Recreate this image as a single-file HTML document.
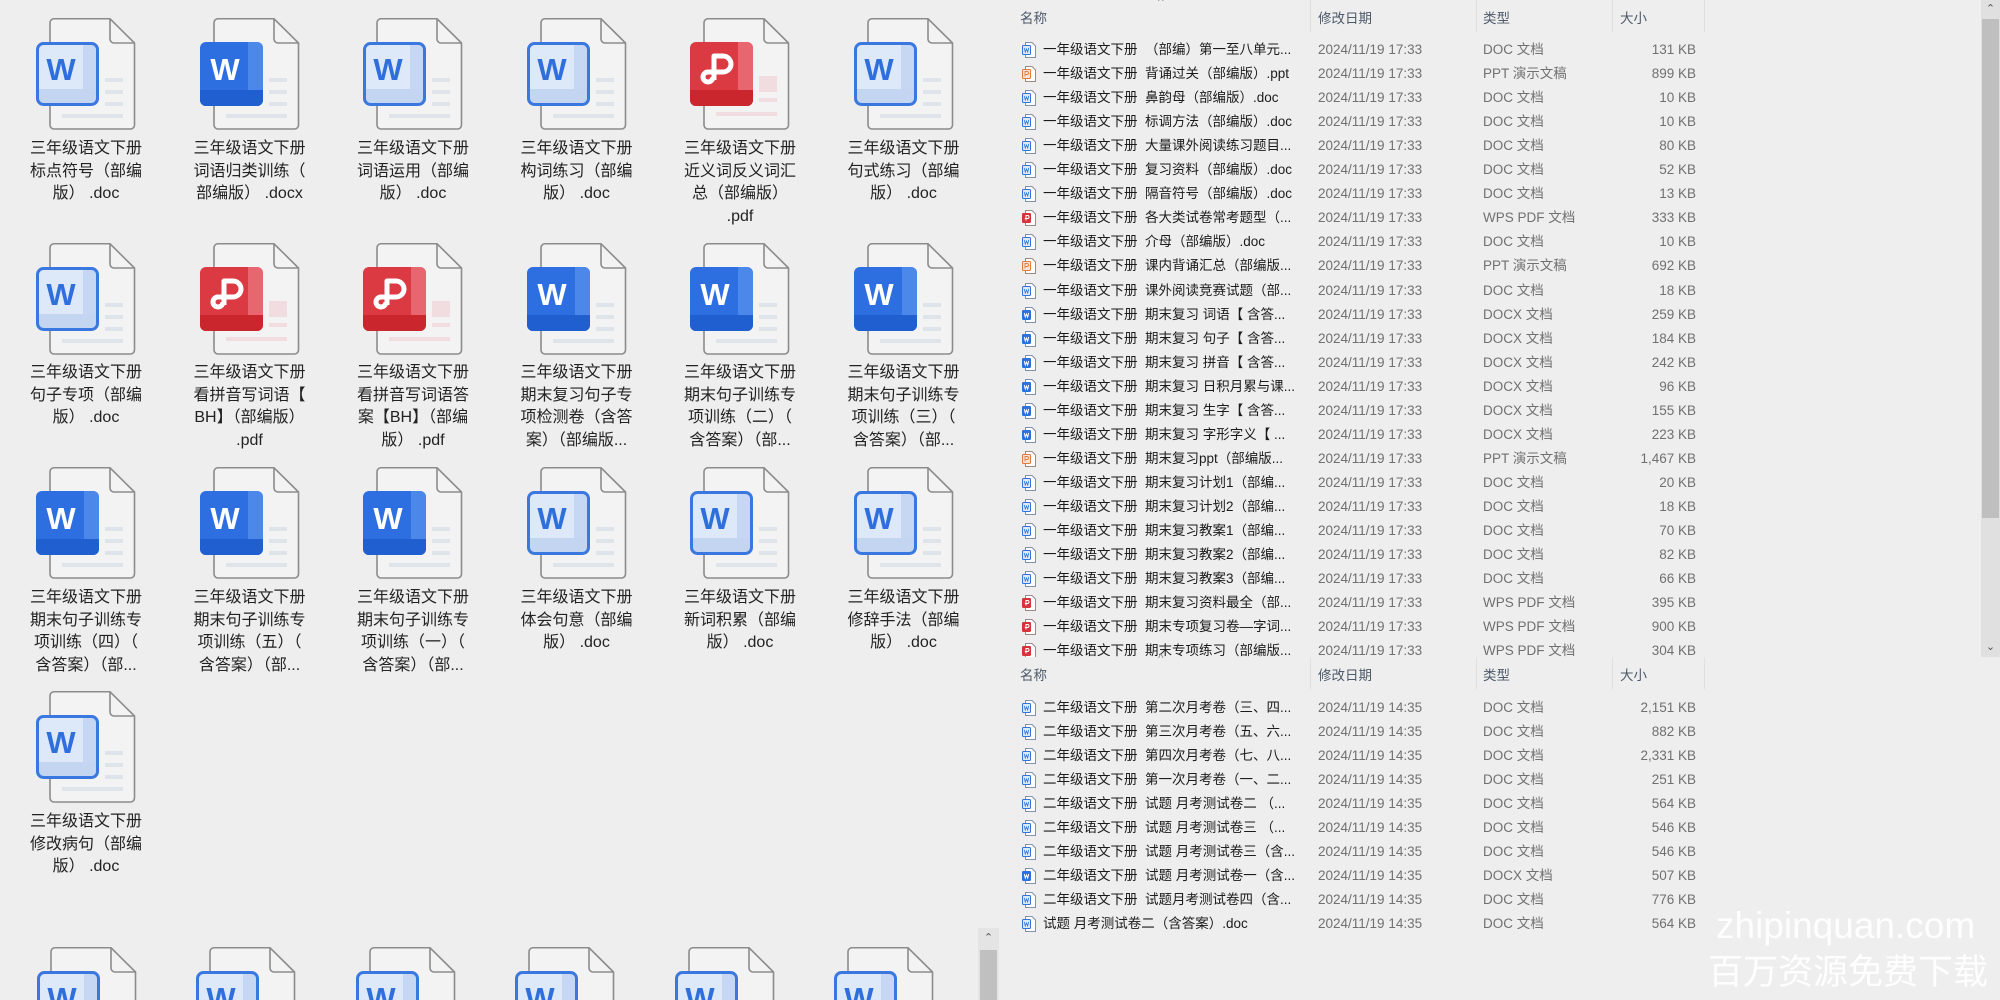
<!DOCTYPE html>
<html><head><meta charset="utf-8">
<style>
html,body{margin:0;padding:0;overflow:hidden;width:2000px;height:1000px;}
body{background:#eeeeee;font-family:"Liberation Sans","Noto Sans CJK SC",sans-serif;}
#w{position:relative;width:2000px;height:1000px;overflow:hidden;background:#eeeeee;}
.ic{position:absolute;width:100px;height:112px;}
.ic2{position:absolute;width:100px;height:53px;top:947px;}
.lb{position:absolute;width:140px;text-align:center;font-size:16px;line-height:22.5px;color:#222;}
.r{position:absolute;left:0;width:1980px;height:20px;font-size:13.5px;line-height:20px;white-space:nowrap;}
.r svg{position:absolute;left:1020px;top:2px;width:18px;height:16px;}
.r .n{position:absolute;left:1043px;color:#1b1b1b;width:265px;overflow:hidden;}
.r .d{position:absolute;left:1318px;color:#707070;font-size:13.5px;}
.r .t{position:absolute;left:1483px;color:#707070;}
.r .s{position:absolute;left:1600px;width:96px;text-align:right;color:#707070;}
.h{position:absolute;left:1000px;width:980px;height:32px;font-size:13.5px;color:#4d5a6a;}
.h span{position:absolute;top:7px;}
.h i{position:absolute;top:0;width:1px;height:32px;background:#e0e0e0;}
.h b{position:absolute;top:-6px;left:158px;font-weight:normal;color:#888;font-size:12px;}
</style></head><body><div id="w">
<svg width="0" height="0" style="position:absolute">
<defs>
<g id="doc">
<path d="M18,0.75 H74 L98.5,25 V107 a4,4 0 0 1 -4,4 H18 a4,4 0 0 1 -4,-4 V4.75 a4,4 0 0 1 4,-4 Z" fill="#f3f3f3" stroke="#8c8c8c" stroke-width="1.6"/>
<path d="M74,0.75 V21 a4,4 0 0 0 4,4 H98.5" fill="none" stroke="#8c8c8c" stroke-width="1.6"/>
</g>
<symbol id="bw" viewBox="0 0 100 112">
<use href="#doc"/>
<rect x="69" y="60" width="18" height="4" fill="#dfe3ea"/><rect x="69" y="72" width="18" height="4" fill="#dfe3ea"/><rect x="69" y="84" width="18" height="4" fill="#dfe3ea"/><rect x="26" y="96" width="61" height="4" fill="#dfe3ea"/>
<rect x="1.5" y="25.5" width="60" height="61" rx="6" fill="#dde8f8"/>
<rect x="47" y="27" width="13" height="58" fill="#c6d7f3"/>
<rect x="3" y="71" width="57" height="14" fill="#c4d5f2"/>
<rect x="1.5" y="25.5" width="60" height="61" rx="6" fill="none" stroke="#3a78e0" stroke-width="3"/>
<text x="25" y="62" font-family="Liberation Sans,sans-serif" font-weight="bold" font-size="31" fill="#2f6fdc" text-anchor="middle">W</text>
</symbol>
<symbol id="bs" viewBox="0 0 100 112">
<use href="#doc"/>
<rect x="69" y="60" width="18" height="4" fill="#dfe3ea"/><rect x="69" y="72" width="18" height="4" fill="#dfe3ea"/><rect x="69" y="84" width="18" height="4" fill="#dfe3ea"/><rect x="26" y="96" width="61" height="4" fill="#dfe3ea"/>
<rect x="0" y="24" width="63" height="64" rx="6" fill="#2d6fe0"/>
<path d="M48,24 H57 a6,6 0 0 1 6,6 V82 a6,6 0 0 1 -6,6 H48 Z" fill="#4c87ea"/>
<path d="M0,72 H63 V82 a6,6 0 0 1 -6,6 H6 a6,6 0 0 1 -6,-6 Z" fill="#1f5fd0"/>
<text x="25" y="62" font-family="Liberation Sans,sans-serif" font-weight="bold" font-size="31" fill="#ffffff" text-anchor="middle">W</text>
</symbol>
<symbol id="bp" viewBox="0 0 100 112">
<use href="#doc"/>
<rect x="69" y="58" width="18" height="16" fill="#f1dde0"/><rect x="69" y="80" width="18" height="4" fill="#f1dde0"/><rect x="26" y="94" width="61" height="4" fill="#f1dde0"/>
<rect x="0" y="24" width="63" height="64" rx="6" fill="#dc3a42"/>
<path d="M48,24 H57 a6,6 0 0 1 6,6 V82 a6,6 0 0 1 -6,6 H48 Z" fill="#e86670"/>
<path d="M0,72 H63 V82 a6,6 0 0 1 -6,6 H6 a6,6 0 0 1 -6,-6 Z" fill="#c9262e"/>
<path d="M24,62 V38 H33 a8,8 0 0 1 0,16 H18 a5,5 0 1 0 5,5" fill="none" stroke="#fff" stroke-width="5" stroke-linejoin="round"/>
</symbol>
<symbol id="sd" viewBox="0 0 18 16">
<path d="M5.5,0.5 H12 L15.5,4 V15.5 H5.5 Z" fill="#fff" stroke="#8290aa"/>
<rect x="2.5" y="3.5" width="8" height="9" rx="1" fill="#dde8fa" stroke="#3372dc"/>
<path d="M4.3,6 L5.3,10 L6.5,7 L7.7,10 L8.7,6" fill="none" stroke="#3372dc" stroke-width="0.8"/>
</symbol>
<symbol id="sx" viewBox="0 0 18 16">
<path d="M5.5,0.5 H12 L15.5,4 V15.5 H5.5 Z" fill="#fff" stroke="#8290aa"/>
<rect x="2" y="3" width="9" height="10" rx="1.2" fill="#2d6fe0"/>
<path d="M4.3,6 L5.3,10 L6.5,7 L7.7,10 L8.7,6" fill="none" stroke="#fff" stroke-width="1"/>
</symbol>
<symbol id="sp" viewBox="0 0 18 16">
<path d="M5.5,0.5 H12 L15.5,4 V15.5 H5.5 Z" fill="#fff" stroke="#9a8a80"/>
<rect x="2.5" y="3.5" width="8" height="9" rx="1" fill="#fbe3d6" stroke="#e07a3c"/>
<path d="M5,10.5 V5.5 H7 a1.5,1.5 0 0 1 0,3 H5" fill="none" stroke="#e07a3c" stroke-width="0.9"/>
</symbol>
<symbol id="sf" viewBox="0 0 18 16">
<path d="M5.5,0.5 H12 L15.5,4 V15.5 H5.5 Z" fill="#fff" stroke="#9a8a8a"/>
<rect x="2" y="3" width="9" height="10" rx="1.2" fill="#d8323a"/>
<path d="M6,10.5 V5.5 H7.5 a1.5,1.5 0 0 1 0,3 H4.8" fill="none" stroke="#fff" stroke-width="1"/>
</symbol>
</defs></svg>

<svg class="ic" style="left:36px;top:18px"><use href="#bw"/></svg>
<svg class="ic" style="left:199.5px;top:18px"><use href="#bs"/></svg>
<svg class="ic" style="left:363px;top:18px"><use href="#bw"/></svg>
<svg class="ic" style="left:526.5px;top:18px"><use href="#bw"/></svg>
<svg class="ic" style="left:690px;top:18px"><use href="#bp"/></svg>
<svg class="ic" style="left:853.5px;top:18px"><use href="#bw"/></svg>
<div class="lb" style="left:16px;top:138px">三年级语文下册<br>标点符号（部编<br>版） .doc</div>
<div class="lb" style="left:179.5px;top:138px">三年级语文下册<br>词语归类训练（<br>部编版） .docx</div>
<div class="lb" style="left:343px;top:138px">三年级语文下册<br>词语运用（部编<br>版） .doc</div>
<div class="lb" style="left:506.5px;top:138px">三年级语文下册<br>构词练习（部编<br>版） .doc</div>
<div class="lb" style="left:670px;top:138px">三年级语文下册<br>近义词反义词汇<br>总（部编版）<br>.pdf</div>
<div class="lb" style="left:833.5px;top:138px">三年级语文下册<br>句式练习（部编<br>版） .doc</div>

<svg class="ic" style="left:36px;top:243px"><use href="#bw"/></svg>
<svg class="ic" style="left:199.5px;top:243px"><use href="#bp"/></svg>
<svg class="ic" style="left:363px;top:243px"><use href="#bp"/></svg>
<svg class="ic" style="left:526.5px;top:243px"><use href="#bs"/></svg>
<svg class="ic" style="left:690px;top:243px"><use href="#bs"/></svg>
<svg class="ic" style="left:853.5px;top:243px"><use href="#bs"/></svg>
<div class="lb" style="left:16px;top:362px">三年级语文下册<br>句子专项（部编<br>版） .doc</div>
<div class="lb" style="left:179.5px;top:362px">三年级语文下册<br>看拼音写词语【<br>BH】（部编版）<br>.pdf</div>
<div class="lb" style="left:343px;top:362px">三年级语文下册<br>看拼音写词语答<br>案【BH】（部编<br>版） .pdf</div>
<div class="lb" style="left:506.5px;top:362px">三年级语文下册<br>期末复习句子专<br>项检测卷（含答<br>案）（部编版...</div>
<div class="lb" style="left:670px;top:362px">三年级语文下册<br>期末句子训练专<br>项训练（二）（<br>含答案）（部...</div>
<div class="lb" style="left:833.5px;top:362px">三年级语文下册<br>期末句子训练专<br>项训练（三）（<br>含答案）（部...</div>

<svg class="ic" style="left:36px;top:467px"><use href="#bs"/></svg>
<svg class="ic" style="left:199.5px;top:467px"><use href="#bs"/></svg>
<svg class="ic" style="left:363px;top:467px"><use href="#bs"/></svg>
<svg class="ic" style="left:526.5px;top:467px"><use href="#bw"/></svg>
<svg class="ic" style="left:690px;top:467px"><use href="#bw"/></svg>
<svg class="ic" style="left:853.5px;top:467px"><use href="#bw"/></svg>
<div class="lb" style="left:16px;top:587px">三年级语文下册<br>期末句子训练专<br>项训练（四）（<br>含答案）（部...</div>
<div class="lb" style="left:179.5px;top:587px">三年级语文下册<br>期末句子训练专<br>项训练（五）（<br>含答案）（部...</div>
<div class="lb" style="left:343px;top:587px">三年级语文下册<br>期末句子训练专<br>项训练（一）（<br>含答案）（部...</div>
<div class="lb" style="left:506.5px;top:587px">三年级语文下册<br>体会句意（部编<br>版） .doc</div>
<div class="lb" style="left:670px;top:587px">三年级语文下册<br>新词积累（部编<br>版） .doc</div>
<div class="lb" style="left:833.5px;top:587px">三年级语文下册<br>修辞手法（部编<br>版） .doc</div>

<svg class="ic" style="left:36px;top:691px"><use href="#bw"/></svg>
<div class="lb" style="left:16px;top:811px">三年级语文下册<br>修改病句（部编<br>版） .doc</div>

<svg class="ic2" style="left:37px" viewBox="0 0 100 53"><use href="#bw" width="100" height="112"/></svg>
<svg class="ic2" style="left:196px" viewBox="0 0 100 53"><use href="#bw" width="100" height="112"/></svg>
<svg class="ic2" style="left:356px" viewBox="0 0 100 53"><use href="#bw" width="100" height="112"/></svg>
<svg class="ic2" style="left:515px" viewBox="0 0 100 53"><use href="#bw" width="100" height="112"/></svg>
<svg class="ic2" style="left:675px" viewBox="0 0 100 53"><use href="#bw" width="100" height="112"/></svg>
<svg class="ic2" style="left:834px" viewBox="0 0 100 53"><use href="#bw" width="100" height="112"/></svg>

<div style="position:absolute;left:978px;top:928px;width:21px;height:72px;background:#e4e4e4"></div>
<div style="position:absolute;left:978px;top:928px;width:21px;height:20px;text-align:center;font-size:11px;line-height:20px;color:#555">&#8963;</div>
<div style="position:absolute;left:980px;top:950px;width:17px;height:50px;background:#c0c0c0"></div>

<div class="h" style="top:0"><span style="left:20px">名称</span><b>^</b><i style="left:310px"></i><span style="left:318px">修改日期</span><i style="left:476px"></i><span style="left:483px">类型</span><i style="left:612px"></i><span style="left:620px">大小</span><i style="left:704px"></i></div>

<div class="r" style="top:40px"><svg><use href="#sd"/></svg><span class="n">一年级语文下册&nbsp; （部编）第一至八单元...</span><span class="d">2024/11/19 17:33</span><span class="t">DOC 文档</span><span class="s">131 KB</span></div>
<div class="r" style="top:64px"><svg><use href="#sp"/></svg><span class="n">一年级语文下册&nbsp; 背诵过关（部编版）.ppt</span><span class="d">2024/11/19 17:33</span><span class="t">PPT 演示文稿</span><span class="s">899 KB</span></div>
<div class="r" style="top:88px"><svg><use href="#sd"/></svg><span class="n">一年级语文下册&nbsp; 鼻韵母（部编版）.doc</span><span class="d">2024/11/19 17:33</span><span class="t">DOC 文档</span><span class="s">10 KB</span></div>
<div class="r" style="top:112px"><svg><use href="#sd"/></svg><span class="n">一年级语文下册&nbsp; 标调方法（部编版）.doc</span><span class="d">2024/11/19 17:33</span><span class="t">DOC 文档</span><span class="s">10 KB</span></div>
<div class="r" style="top:136px"><svg><use href="#sd"/></svg><span class="n">一年级语文下册&nbsp; 大量课外阅读练习题目...</span><span class="d">2024/11/19 17:33</span><span class="t">DOC 文档</span><span class="s">80 KB</span></div>
<div class="r" style="top:160px"><svg><use href="#sd"/></svg><span class="n">一年级语文下册&nbsp; 复习资料（部编版）.doc</span><span class="d">2024/11/19 17:33</span><span class="t">DOC 文档</span><span class="s">52 KB</span></div>
<div class="r" style="top:184px"><svg><use href="#sd"/></svg><span class="n">一年级语文下册&nbsp; 隔音符号（部编版）.doc</span><span class="d">2024/11/19 17:33</span><span class="t">DOC 文档</span><span class="s">13 KB</span></div>
<div class="r" style="top:208px"><svg><use href="#sf"/></svg><span class="n">一年级语文下册&nbsp; 各大类试卷常考题型（...</span><span class="d">2024/11/19 17:33</span><span class="t">WPS PDF 文档</span><span class="s">333 KB</span></div>
<div class="r" style="top:232px"><svg><use href="#sd"/></svg><span class="n">一年级语文下册&nbsp; 介母（部编版）.doc</span><span class="d">2024/11/19 17:33</span><span class="t">DOC 文档</span><span class="s">10 KB</span></div>
<div class="r" style="top:256px"><svg><use href="#sp"/></svg><span class="n">一年级语文下册&nbsp; 课内背诵汇总（部编版...</span><span class="d">2024/11/19 17:33</span><span class="t">PPT 演示文稿</span><span class="s">692 KB</span></div>
<div class="r" style="top:281px"><svg><use href="#sd"/></svg><span class="n">一年级语文下册&nbsp; 课外阅读竞赛试题（部...</span><span class="d">2024/11/19 17:33</span><span class="t">DOC 文档</span><span class="s">18 KB</span></div>
<div class="r" style="top:305px"><svg><use href="#sx"/></svg><span class="n">一年级语文下册&nbsp; 期末复习 词语【 含答...</span><span class="d">2024/11/19 17:33</span><span class="t">DOCX 文档</span><span class="s">259 KB</span></div>
<div class="r" style="top:329px"><svg><use href="#sx"/></svg><span class="n">一年级语文下册&nbsp; 期末复习 句子【 含答...</span><span class="d">2024/11/19 17:33</span><span class="t">DOCX 文档</span><span class="s">184 KB</span></div>
<div class="r" style="top:353px"><svg><use href="#sx"/></svg><span class="n">一年级语文下册&nbsp; 期末复习 拼音【 含答...</span><span class="d">2024/11/19 17:33</span><span class="t">DOCX 文档</span><span class="s">242 KB</span></div>
<div class="r" style="top:377px"><svg><use href="#sx"/></svg><span class="n">一年级语文下册&nbsp; 期末复习 日积月累与课...</span><span class="d">2024/11/19 17:33</span><span class="t">DOCX 文档</span><span class="s">96 KB</span></div>
<div class="r" style="top:401px"><svg><use href="#sx"/></svg><span class="n">一年级语文下册&nbsp; 期末复习 生字【 含答...</span><span class="d">2024/11/19 17:33</span><span class="t">DOCX 文档</span><span class="s">155 KB</span></div>
<div class="r" style="top:425px"><svg><use href="#sx"/></svg><span class="n">一年级语文下册&nbsp; 期末复习 字形字义【 ...</span><span class="d">2024/11/19 17:33</span><span class="t">DOCX 文档</span><span class="s">223 KB</span></div>
<div class="r" style="top:449px"><svg><use href="#sp"/></svg><span class="n">一年级语文下册&nbsp; 期末复习ppt（部编版...</span><span class="d">2024/11/19 17:33</span><span class="t">PPT 演示文稿</span><span class="s">1,467 KB</span></div>
<div class="r" style="top:473px"><svg><use href="#sd"/></svg><span class="n">一年级语文下册&nbsp; 期末复习计划1（部编...</span><span class="d">2024/11/19 17:33</span><span class="t">DOC 文档</span><span class="s">20 KB</span></div>
<div class="r" style="top:497px"><svg><use href="#sd"/></svg><span class="n">一年级语文下册&nbsp; 期末复习计划2（部编...</span><span class="d">2024/11/19 17:33</span><span class="t">DOC 文档</span><span class="s">18 KB</span></div>
<div class="r" style="top:521px"><svg><use href="#sd"/></svg><span class="n">一年级语文下册&nbsp; 期末复习教案1（部编...</span><span class="d">2024/11/19 17:33</span><span class="t">DOC 文档</span><span class="s">70 KB</span></div>
<div class="r" style="top:545px"><svg><use href="#sd"/></svg><span class="n">一年级语文下册&nbsp; 期末复习教案2（部编...</span><span class="d">2024/11/19 17:33</span><span class="t">DOC 文档</span><span class="s">82 KB</span></div>
<div class="r" style="top:569px"><svg><use href="#sd"/></svg><span class="n">一年级语文下册&nbsp; 期末复习教案3（部编...</span><span class="d">2024/11/19 17:33</span><span class="t">DOC 文档</span><span class="s">66 KB</span></div>
<div class="r" style="top:593px"><svg><use href="#sf"/></svg><span class="n">一年级语文下册&nbsp; 期末复习资料最全（部...</span><span class="d">2024/11/19 17:33</span><span class="t">WPS PDF 文档</span><span class="s">395 KB</span></div>
<div class="r" style="top:617px"><svg><use href="#sf"/></svg><span class="n">一年级语文下册&nbsp; 期末专项复习卷—字词...</span><span class="d">2024/11/19 17:33</span><span class="t">WPS PDF 文档</span><span class="s">900 KB</span></div>
<div class="r" style="top:641px"><svg><use href="#sf"/></svg><span class="n">一年级语文下册&nbsp; 期末专项练习（部编版...</span><span class="d">2024/11/19 17:33</span><span class="t">WPS PDF 文档</span><span class="s">304 KB</span></div>

<div class="h" style="top:657px;background:#eeeeee"><span style="left:20px">名称</span><b>^</b><i style="left:310px"></i><span style="left:318px">修改日期</span><i style="left:476px"></i><span style="left:483px">类型</span><i style="left:612px"></i><span style="left:620px">大小</span><i style="left:704px"></i></div>

<div class="r" style="top:698px"><svg><use href="#sd"/></svg><span class="n">二年级语文下册&nbsp; 第二次月考卷（三、四...</span><span class="d">2024/11/19 14:35</span><span class="t">DOC 文档</span><span class="s">2,151 KB</span></div>
<div class="r" style="top:722px"><svg><use href="#sd"/></svg><span class="n">二年级语文下册&nbsp; 第三次月考卷（五、六...</span><span class="d">2024/11/19 14:35</span><span class="t">DOC 文档</span><span class="s">882 KB</span></div>
<div class="r" style="top:746px"><svg><use href="#sd"/></svg><span class="n">二年级语文下册&nbsp; 第四次月考卷（七、八...</span><span class="d">2024/11/19 14:35</span><span class="t">DOC 文档</span><span class="s">2,331 KB</span></div>
<div class="r" style="top:770px"><svg><use href="#sd"/></svg><span class="n">二年级语文下册&nbsp; 第一次月考卷（一、二...</span><span class="d">2024/11/19 14:35</span><span class="t">DOC 文档</span><span class="s">251 KB</span></div>
<div class="r" style="top:794px"><svg><use href="#sd"/></svg><span class="n">二年级语文下册&nbsp; 试题 月考测试卷二 （...</span><span class="d">2024/11/19 14:35</span><span class="t">DOC 文档</span><span class="s">564 KB</span></div>
<div class="r" style="top:818px"><svg><use href="#sd"/></svg><span class="n">二年级语文下册&nbsp; 试题 月考测试卷三 （...</span><span class="d">2024/11/19 14:35</span><span class="t">DOC 文档</span><span class="s">546 KB</span></div>
<div class="r" style="top:842px"><svg><use href="#sd"/></svg><span class="n">二年级语文下册&nbsp; 试题 月考测试卷三（含...</span><span class="d">2024/11/19 14:35</span><span class="t">DOC 文档</span><span class="s">546 KB</span></div>
<div class="r" style="top:866px"><svg><use href="#sx"/></svg><span class="n">二年级语文下册&nbsp; 试题 月考测试卷一（含...</span><span class="d">2024/11/19 14:35</span><span class="t">DOCX 文档</span><span class="s">507 KB</span></div>
<div class="r" style="top:890px"><svg><use href="#sd"/></svg><span class="n">二年级语文下册&nbsp; 试题月考测试卷四（含...</span><span class="d">2024/11/19 14:35</span><span class="t">DOC 文档</span><span class="s">776 KB</span></div>
<div class="r" style="top:914px"><svg><use href="#sd"/></svg><span class="n">试题 月考测试卷二（含答案）.doc</span><span class="d">2024/11/19 14:35</span><span class="t">DOC 文档</span><span class="s">564 KB</span></div>

<div style="position:absolute;left:1981px;top:0;width:19px;height:657px;background:#e0e0e0"></div>
<div style="position:absolute;left:1981px;top:0;width:19px;height:18px;text-align:center;font-size:11px;line-height:18px;color:#555">&#8963;</div>
<div style="position:absolute;left:1982px;top:19px;width:17px;height:499px;background:#bfbfbf"></div>
<div style="position:absolute;left:1981px;top:638px;width:19px;height:18px;text-align:center;font-size:11px;line-height:18px;color:#555">&#8964;</div>

<div style="position:absolute;left:1716px;top:904px;font-size:37px;line-height:44px;color:rgba(255,255,255,0.92);font-family:'Liberation Sans',sans-serif;">zhipinquan.com</div>
<div style="position:absolute;left:1708px;top:952px;font-size:35px;line-height:42px;color:rgba(255,255,255,0.92);font-family:'Liberation Sans','Noto Sans CJK SC',sans-serif;">百万资源免费下载</div>
</div></body></html>
